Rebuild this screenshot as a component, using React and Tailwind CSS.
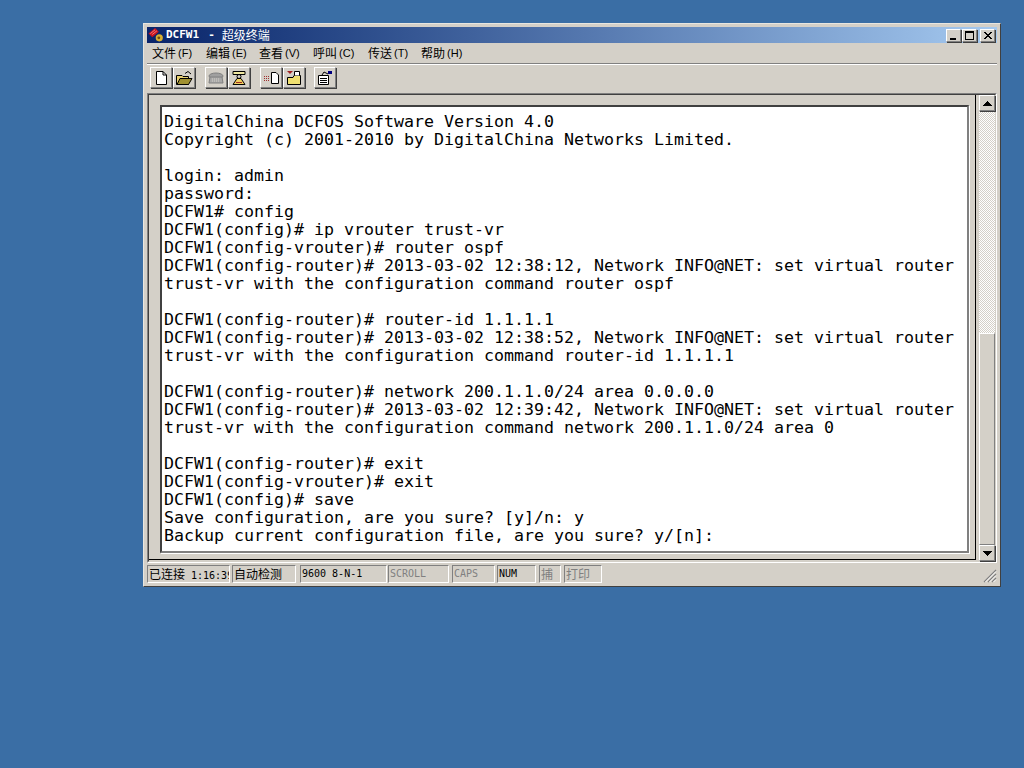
const lines = [
"DigitalChina DCFOS Software Version 4.0",
"Copyright (c) 2001-2010 by DigitalChina Networks Limited.",
"",
"login: admin",
"password:",
"DCFW1# config",
"DCFW1(config)# ip vrouter trust-vr",
"DCFW1(config-vrouter)# router ospf",
"DCFW1(config-router)# 2013-03-02 12:38:12, Network INFO@NET: set virtual router",
"trust-vr with the configuration command router ospf",
"",
"DCFW1(config-router)# router-id 1.1.1.1",
"DCFW1(config-router)# 2013-03-02 12:38:52, Network INFO@NET: set virtual router",
"trust-vr with the configuration command router-id 1.1.1.1",
"",
"DCFW1(config-router)# network 200.1.1.0/24 area 0.0.0.0",
"DCFW1(config-router)# 2013-03-02 12:39:42, Network INFO@NET: set virtual router",
"trust-vr with the configuration command network 200.1.1.0/24 area 0",
"",
"DCFW1(config-router)# exit",
"DCFW1(config-vrouter)# exit",
"DCFW1(config)# save",
"Save configuration, are you sure? [y]/n: y",
"Backup current configuration file, are you sure? y/[n]:",
];

const raised = "border border-t-white border-l-white border-r-[#808080] border-b-[#808080]";
const cjk = { fontFamily: '"Noto Sans CJK SC", "Liberation Sans", sans-serif' };
const mono = { fontFamily: '"DejaVu Sans Mono", "Noto Sans CJK SC", monospace' };

function WinBtn({ children, className = "" }) {
  return (
    <div className={`w-[15px] h-[13px] bg-[#d4d0c8] ${raised} flex items-center justify-center shadow-[1px_1px_0_#404040] ${className}`}>
      <svg width="10" height="9" viewBox="0 0 10 9" shapeRendering="crispEdges">{children}</svg>
    </div>
  );
}

function ToolBtn({ children, className = "" }) {
  return (
    <div className={`w-[22px] h-[21px] bg-[#d4d0c8] ${raised} flex items-center justify-center shadow-[1px_1px_0_#404040] ${className}`}>
      <svg width="18" height="18" viewBox="0 0 18 18">{children}</svg>
    </div>
  );
}

function Pane({ w, children, dim, isMono, className = "" }) {
  return (
    <div
      className={`h-[18px] shrink-0 overflow-hidden whitespace-nowrap border border-t-[#808080] border-l-[#808080] border-r-white border-b-white pl-[1px] leading-[15px] ${dim ? "text-[#808080]" : "text-black"} ${w} ${className}`}
      style={isMono ? { ...mono, fontSize: "10px" } : { ...cjk, fontSize: "12px" }}
    >
      {children}
    </div>
  );
}

function Menu({ label, k, w }) {
  return (
    <div className={`shrink-0 text-black whitespace-nowrap flex items-center ${w}`}>
      <span className="text-[12px]" style={cjk}>{label}</span>
      <span className="text-[11px] ml-[2px]" style={{ fontFamily: '"Liberation Sans", sans-serif' }}>({k})</span>
    </div>
  );
}

export default function App() {
  return (
    <div className="w-[1024px] h-[768px] bg-[#3a6ea5] overflow-hidden pt-[23px] pl-[143px]">
      <div className="w-[858px] h-[564px] bg-[#d4d0c8] border border-t-[#e8e6e0] border-l-[#e8e6e0] border-r-[#404040] border-b-[#404040] p-[3px] flex flex-col">
        {/* title bar */}
        <div className="h-[16px] shrink-0 flex items-center pr-[2px] bg-gradient-to-r from-[#0a246a] to-[#a6caf0]">
          <svg width="18" height="16" viewBox="0 0 18 17" className="shrink-0">
            <path d="M1 7 L8 1 L12 5 L5 11 Z" fill="#c8141e" />
            <path d="M3 7 L8 3 M5 8 L10 4" stroke="#f08080" strokeWidth="1" />
            <circle cx="12.5" cy="11.5" r="3.8" fill="#d8b030" />
            <circle cx="12" cy="11.5" r="1.5" fill="#705010" />
          </svg>
          <div className="ml-[1px] text-white text-[11px] font-bold whitespace-nowrap flex items-center" style={mono}>
            DCFW1<span className="ml-[9px] mr-[7px]">-</span><span className="text-[12px] font-normal" style={cjk}>超级终端</span>
          </div>
          <div className="ml-auto flex items-center">
            <WinBtn><rect x="1" y="7" width="6" height="2" fill="#000" /></WinBtn>
            <WinBtn className="ml-[1px]"><path d="M0 0H9V2H0Z M0 2H1V9H0Z M8 2H9V9H8Z M0 8H9V9H0Z" fill="#000" /></WinBtn>
            <WinBtn className="ml-[3px]"><path d="M1 1L8 8M8 1L1 8M2 1L9 8M9 1L2 8" stroke="#000" strokeWidth="1" /></WinBtn>
          </div>
        </div>
        {/* menu */}
        <div className="h-[21px] shrink-0 flex items-center pl-[5px] border-b border-b-[#808080]">
          <Menu label="文件" k="F" w="w-[54px]" />
          <Menu label="编辑" k="E" w="w-[53px]" />
          <Menu label="查看" k="V" w="w-[54px]" />
          <Menu label="呼叫" k="C" w="w-[55px]" />
          <Menu label="传送" k="T" w="w-[53px]" />
          <Menu label="帮助" k="H" w="w-[50px]" />
        </div>
        {/* toolbar */}
        <div className="h-[29px] shrink-0 flex items-start pl-[3px] pt-[2px] border-t border-t-white">
          <ToolBtn>
            <path d="M4.5 2.5H11L14.5 6V15.5H4.5Z" fill="#fff" stroke="#000" />
            <path d="M11 2.5V6H14.5" fill="none" stroke="#000" />
          </ToolBtn>
          <ToolBtn className="ml-[1px]">
            <path d="M1.5 6.5H7L8 7.5H13.5V15.5H1.5Z" fill="#e8d070" stroke="#000" />
            <path d="M2 15.5L5 9.5H17L13.5 15.5Z" fill="#a09030" stroke="#000" />
            <path d="M10 4.5L13 2.5L16 5" fill="none" stroke="#000" />
          </ToolBtn>
          <ToolBtn className="ml-[10px]">
            <ellipse cx="9" cy="7" rx="7" ry="3" fill="#a0a0a0" stroke="#808080" />
            <path d="M3 8L2 14H16L15 8Z" fill="#a8a8a8" stroke="#808080" />
            <path d="M5 10H13M5 12H13" stroke="#d4d0c8" strokeDasharray="1 1" />
          </ToolBtn>
          <ToolBtn className="ml-[1px]">
            <path d="M3 2.5H15V5.5H3Z" fill="#f0e8a0" stroke="#000" />
            <circle cx="9" cy="7.5" r="2" fill="none" stroke="#000" />
            <path d="M7 9.5L3 15.5H15L11 9.5Z" fill="#f0d060" stroke="#000" />
            <path d="M6 13.5H12" stroke="#a03020" />
          </ToolBtn>
          <ToolBtn className="ml-[10px]">
            <path d="M9.5 3.5H14L16.5 6V14.5H9.5Z" fill="#fff" stroke="#000" />
            <path d="M2 7.5H8M2 9.5H8M2 11.5H8" stroke="#a03030" strokeDasharray="1 1" />
          </ToolBtn>
          <ToolBtn className="ml-[1px]">
            <path d="M2.5 8.5H8L9 6.5H15.5V15.5H2.5Z" fill="#f0e070" stroke="#000" />
            <path d="M2 2H8L5 5Z" fill="#a02020" />
            <path d="M9.5 6.5V2.5H14.5V6.5" fill="#fff" stroke="#000" />
          </ToolBtn>
          <ToolBtn className="ml-[9px]">
            <path d="M2.5 6.5H12.5V15.5H2.5Z" fill="#fff" stroke="#000" />
            <path d="M4 9.5H11M4 11.5H11M4 13.5H11" stroke="#000" />
            <path d="M12 2H16V5H12Z" fill="#000080" />
            <path d="M6 6L8 3L12 5" fill="none" stroke="#000" />
          </ToolBtn>
        </div>
        {/* terminal + scrollbar */}
        <div className="flex-1 min-h-0 flex border border-t-[#808080] border-l-[#808080] border-r-white border-b-white">
          <div className="flex-1 min-w-0 border border-t-[#404040] border-l-[#404040] border-r-[#d4d0c8] border-b-[#d4d0c8] flex">
            <div className="flex-1 min-w-0 pr-[3px] pb-[1px] flex flex-col">
              <div className="flex-1 min-h-0 bg-[#d4d0c8] pt-[10px] pl-[11px] pr-[6px] pb-[6px] flex border-r border-r-black border-b border-b-black">
                <div className="flex-1 min-w-0 bg-white border-2 border-t-[#404040] border-l-[#404040] border-r-[#808080] border-b-[#808080] shadow-[1px_1px_0_#fff] pt-[6px] pl-[2px] overflow-hidden">
                  <pre
                    className="m-0 text-black whitespace-pre"
                    style={{ fontFamily: '"DejaVu Sans Mono", monospace', fontSize: "16.61px", lineHeight: "18px" }}
                  >
                    {lines.join("\n")}
                  </pre>
                </div>
              </div>
            </div>
            <div className="w-[16px] shrink-0 flex flex-col bg-[repeating-conic-gradient(#ffffff_0_25%,#d4d0c8_0_50%)] bg-[length:2px_2px]">
              <div className={`h-[16px] shrink-0 bg-[#d4d0c8] ${raised} flex items-center justify-center shadow-[1px_1px_0_#404040]`}>
                <svg width="9" height="5" viewBox="0 0 9 5" shapeRendering="crispEdges"><path d="M4.5 0L9 5H0Z" fill="#000" /></svg>
              </div>
              <div className="h-[222px] shrink-0" />
              <div className={`flex-1 bg-[#d4d0c8] ${raised}`} />
              <div className={`h-[16px] shrink-0 bg-[#d4d0c8] ${raised} flex items-center justify-center shadow-[1px_1px_0_#404040]`}>
                <svg width="9" height="5" viewBox="0 0 9 5" shapeRendering="crispEdges"><path d="M0 0H9L4.5 5Z" fill="#000" /></svg>
              </div>
            </div>
          </div>
        </div>
        {/* status bar */}
        <div className="h-[20px] shrink-0 flex items-center pt-[1px] relative">
          <Pane w="w-[83px]">已连接<span className="ml-[6px] text-[10px]" style={mono}>1:16:39</span></Pane>
          <Pane w="w-[64px]" className="ml-[2px]">自动检测</Pane>
          <Pane w="w-[87px]" className="ml-[4px]" isMono>9600 8-N-1</Pane>
          <Pane w="w-[61px]" className="ml-[1px]" dim isMono>SCROLL</Pane>
          <Pane w="w-[43px]" className="ml-[3px]" dim isMono>CAPS</Pane>
          <Pane w="w-[39px]" className="ml-[2px]" isMono>NUM</Pane>
          <Pane w="w-[22px]" className="ml-[3px]" dim>捕</Pane>
          <Pane w="w-[38px]" className="ml-[3px]" dim>打印</Pane>
          <svg width="14" height="14" viewBox="0 0 14 14" className="absolute right-0 bottom-0">
            <path d="M13 1L1 13M13 5L5 13M13 9L9 13" stroke="#808080" strokeWidth="1.2" />
            <path d="M13 2.5L2.5 13M13 6.5L6.5 13M13 10.5L10.5 13" stroke="#fff" strokeWidth="1" />
          </svg>
        </div>
      </div>
    </div>
  );
}
